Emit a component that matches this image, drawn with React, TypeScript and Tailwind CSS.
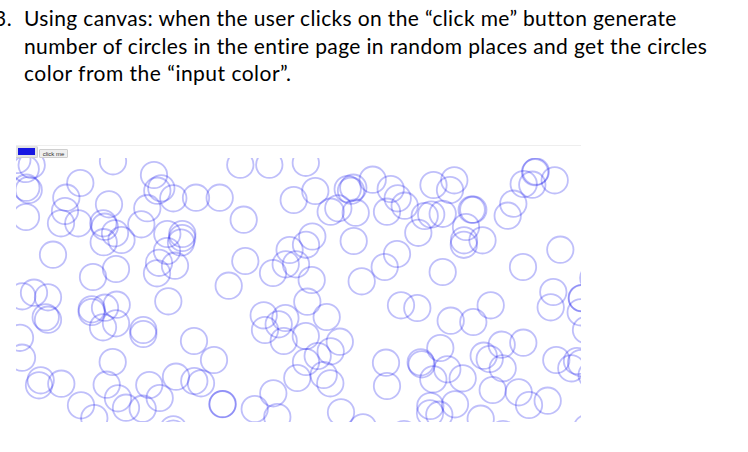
const RADIUS = 13.2;

// Centres of the generated circles, in page coordinates.
const circles: [number, number][] = [
  [31.7, 165], [25.7, 169], [17.3, 160], [26.3, 187.7], [28.7, 190], [26, 217],
  [80.3, 183], [66.3, 197.7], [65, 211], [61, 223.3], [78.3, 223.3], [109, 204.3],
  [113, 161.3], [103.3, 223.3], [104.7, 226.7], [115, 233.3], [121.5, 240], [103.7, 242.2],
  [154, 175], [147.3, 208.2], [141.3, 224.3], [161.3, 188.3], [157.3, 190.7],
  [173.3, 198.3], [196, 197.7], [219.7, 197.7], [240.3, 164.7], [269.3, 164.7],
  [305.8, 162.8], [243.7, 219.7], [293.7, 200], [167.3, 234], [182.3, 234], [182.2, 238],
  [181, 242.5], [159, 262.8], [157, 273.3], [175, 265.7], [167, 251], [245.3, 261],
  [228.7, 285.7], [168.3, 301.3], [273, 273], [289.6, 250], [285.7, 264.3],
  [296, 264.3], [306, 244.8], [312.3, 236.5], [311.7, 280], [307.3, 301.7],
  [326.7, 317], [353.7, 241], [361.7, 281.3], [384.7, 267], [397, 254], [418.3, 232.8],
  [401, 305.3], [417.3, 308], [442.7, 272], [285.4, 318], [305.8, 336], [339.8, 341.7],
  [263.7, 315.3], [278.7, 324.3], [265, 330], [283.7, 341], [143.3, 330], [143.3, 334],
  [53, 254.7], [93, 277], [116, 269], [22.3, 296.3], [34, 292.7], [48, 297.3],
  [45.7, 317.3], [48, 319.7], [20, 337.8], [91.7, 309.3], [91.7, 312], [105, 307.7],
  [116.7, 304.7], [116, 323.3], [103, 327.3], [315.3, 191], [330.7, 211.7],
  [338.3, 208.3], [355.7, 212.7], [347.7, 189], [353.3, 187.7], [351, 190.7],
  [372.7, 179.7], [390.7, 189], [397.7, 198.3], [404.7, 205.7], [387, 211.7],
  [433.5, 185], [424.7, 216], [431.2, 214.5], [442.7, 213.8], [454.3, 180.3],
  [450, 190], [471.7, 209.7], [473.3, 209.7], [466, 227], [464, 240.3], [463.8, 244.8],
  [482.5, 240.3], [507.7, 215.7], [513.3, 203.7], [523.7, 184], [532.3, 184.7],
  [535, 172.2], [535.8, 171.5], [554.7, 180.3], [523, 267], [560.3, 249.7],
  [553.3, 292], [550.7, 307.3], [490.7, 305.3], [450.7, 320.7], [473.3, 322],
  [581.7, 298], [582, 298.2], [580.7, 312.3], [586, 330], [593.3, 278],
  [22, 357.7], [40.7, 380.3], [39, 385.3], [61.3, 383.7], [112.7, 362],
  [106.7, 384.7], [118, 398.3], [81, 405.3], [94.3, 418], [126, 407.7],
  [142.7, 408.7], [149.3, 385], [159.7, 398], [176, 376.7], [194, 341], [214, 360],
  [194.3, 381], [201, 383.3], [222.7, 404], [222.4, 404.2], [254.7, 409],
  [273.3, 393.3], [277.3, 417], [173.3, 429.3], [173.3, 433.5], [297.3, 378],
  [306, 362], [317.7, 356], [330.7, 351.3], [323.7, 375], [330.3, 383.3],
  [386, 362.7], [387, 386], [341, 412.3], [363, 427.3], [440.3, 348],
  [420.7, 362.3], [421.7, 364.3], [447.3, 369.3], [433.3, 379.3], [462.7, 378.3],
  [430.3, 406], [430, 413.3], [439.3, 414.7], [455, 404.3], [480.7, 418.7],
  [492.7, 390], [483.7, 355.7], [489.7, 359], [501.7, 344.7], [523.3, 342.7],
  [502.7, 368.3], [518.7, 392.3], [529, 405], [547.7, 400.7], [556.3, 360],
  [571.3, 368.3], [577, 361], [581, 363], [591.7, 375], [587, 428], [404, 434],
  [503, 434],
];

export default function App() {
  return (
    <main className="h-[452px] w-[748px] overflow-hidden bg-white">
      <section className="flex h-[145px] pt-[4px] font-[Lato,sans-serif] text-[21px] leading-[27.5px] text-black">
        <span className="-ml-[6px] w-[30px] shrink-0 tracking-[0.6px]">3.</span>
        <p className="whitespace-nowrap">
          <span className="block tracking-[0.36px]">Using canvas: when the user clicks on the “click me” button generate</span>
          <span className="block tracking-[0.36px]">number of circles in the entire page in random places and get the circles</span>
          <span className="block tracking-[0.48px]">color from the “input color”.</span>
        </p>
      </section>
      <section className="ml-4 w-[565px] border-t border-[#eeeeee]">
        <div className="flex h-[12px] items-start">
          <span className="flex h-[12px] w-[22px] items-center rounded-r-[2px] border-r border-b border-[#d0d0d0] bg-[#e4e4e4] pl-[2px]">
            <span className="h-[7px] w-[17px] bg-[#1717e2]" />
          </span>
          <button className="mt-[3px] ml-px h-[9px] w-[29px] rounded-[1px] border border-[#cfcfcf] bg-[#efefef] text-center font-['Liberation_Sans',sans-serif] text-[6px] leading-[6px] text-[#333]">
            click me
          </button>
        </div>
        <svg className="block h-[264px] w-[565px]" viewBox="16 158 565 264">
          <g fill="none" stroke="#1414ee" strokeOpacity="0.27" strokeWidth="1.8">
            {circles.map(([x, y], i) => (
              <circle key={i} cx={x} cy={y} r={RADIUS} />
            ))}
          </g>
        </svg>
      </section>
    </main>
  );
}
